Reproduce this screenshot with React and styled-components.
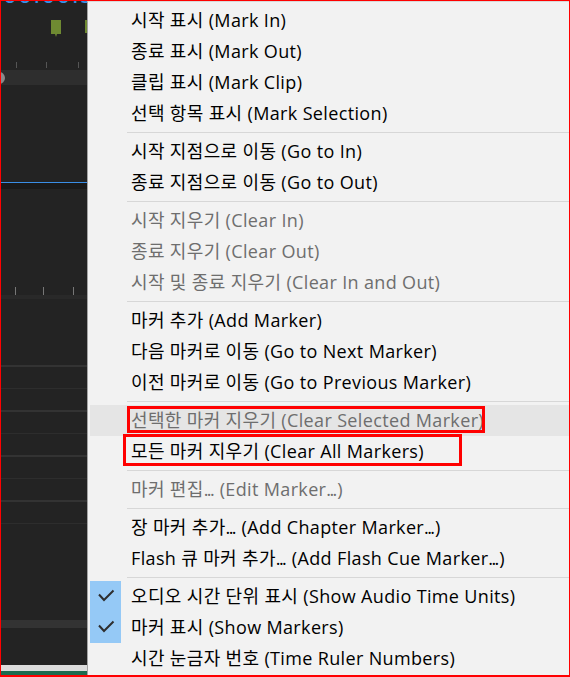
import React from "react";
import styled, { createGlobalStyle } from "styled-components";

const GlobalStyle = createGlobalStyle`
  html, body {
    margin: 0;
    padding: 0;
    background: #f2f2f2;
  }
  * {
    box-sizing: border-box;
  }
`;

const Frame = styled.div`
  display: flex;
  width: 570px;
  height: 677px;
  border: 1px solid #ff0000;
  border-bottom-width: 2px;
  overflow: hidden;
`;

/* ---------- left: the dark timeline behind the menu ---------- */

const Timeline = styled.div`
  display: flex;
  flex-direction: column;
  width: 86px;
  flex-shrink: 0;
  background: #232323;
  overflow: hidden;
`;

const Timecode = styled.div`
  height: 7px;
  overflow: hidden;
  color: #3a92e8;
  font-family: "DejaVu Sans", sans-serif;
  font-size: 22px;
  line-height: 22px;
  white-space: nowrap;
  letter-spacing: 1px;

  span {
    display: block;
    margin-top: -16px;
    margin-left: 2px;
  }
`;

const Strip = styled.div`
  height: ${(p) => p.$h}px;
  flex-shrink: 0;
  background: ${(p) => p.$bg || "transparent"};
`;

const Filler = styled.div`
  flex: 1;
`;

const ScrollStrip = styled.div`
  display: flex;
  align-items: center;
  height: 15px;
  background: #2e2e2e;
`;

const Knob = styled.div`
  width: 12px;
  height: 12px;
  margin-left: -8px;
  border-radius: 50%;
  background: #8a8a8a;
`;

const TrackRow = styled.div`
  height: ${(p) => (p.$thick ? 23 : 22)}px;
  flex-shrink: 0;
  border-top: ${(p) => (p.$thick ? "2px solid #333333" : "1px solid #2d2d2d")};
`;

/* ---------- right: the context menu ---------- */

const Menu = styled.div`
  flex: 1;
  display: flex;
  flex-direction: column;
  padding-top: 3px;
  background: #f2f2f2;
  border-left: 1px solid #a3a3a3;
  border-top: 1px solid #d9d9d9;
  font-family: "Open Sans", "Noto Sans CJK KR", sans-serif;
  font-size: 18px;
  letter-spacing: 0.35px;
`;

const Item = styled.div`
  display: flex;
  align-items: center;
  height: 31px;
  margin-left: 2px;
  background: ${(p) => (p.$hover ? "#e5e5e5" : "transparent")};
  color: ${(p) => (p.$disabled ? "#6e6e6e" : "#000000")};
`;

const CheckCell = styled.div`
  display: flex;
  align-items: center;
  justify-content: center;
  width: 31px;
  height: 31px;
  flex-shrink: 0;
  background: ${(p) => (p.$checked ? "#95c9f6" : "transparent")};
`;

const Label = styled.span`
  position: relative;
  display: inline-block;
  margin-left: 10px;
  height: 31px;
  line-height: 31px;
  white-space: nowrap;
`;

const Dots = styled.span`
  letter-spacing: -1.6px;
  margin-right: 1.6px;
`;

const Callout = styled.span`
  position: absolute;
  left: ${(p) => p.$left}px;
  top: ${(p) => p.$top}px;
  width: ${(p) => p.$w}px;
  height: ${(p) => p.$h}px;
  border: 3px solid #ff0000;
  pointer-events: none;
`;

const Separator = styled.div`
  height: 1px;
  margin: 3px 0 3px 39px;
  background: #d7d7d7;
`;

const Check = () => (
  <svg width="31" height="31" viewBox="0 0 31 31">
    <polyline
      points="9,13.5 14,19 23.5,9.5"
      fill="none"
      stroke="#2e2e2e"
      strokeWidth="2"
    />
  </svg>
);

// split "..." out so the ellipsis can be drawn tighter, like the Windows menu font
const withDots = (text) => {
  if (!text.endsWith("...")) return text;
  return (
    <>
      {text.slice(0, -3)}
      <Dots>...</Dots>
    </>
  );
};

const groups = [
  [
    { ko: "시작 표시", en: "Mark In" },
    { ko: "종료 표시", en: "Mark Out" },
    { ko: "클립 표시", en: "Mark Clip" },
    { ko: "선택 항목 표시", en: "Mark Selection" },
  ],
  [
    { ko: "시작 지점으로 이동", en: "Go to In" },
    { ko: "종료 지점으로 이동", en: "Go to Out" },
  ],
  [
    { ko: "시작 지우기", en: "Clear In", disabled: true },
    { ko: "종료 지우기", en: "Clear Out", disabled: true },
    { ko: "시작 및 종료 지우기", en: "Clear In and Out", disabled: true },
  ],
  [
    { ko: "마커 추가", en: "Add Marker" },
    { ko: "다음 마커로 이동", en: "Go to Next Marker" },
    { ko: "이전 마커로 이동", en: "Go to Previous Marker" },
  ],
  [
    {
      ko: "선택한 마커 지우기",
      en: "Clear Selected Marker",
      disabled: true,
      hover: true,
      box: { left: -4, top: 1, w: 358, h: 27 },
    },
    {
      ko: "모든 마커 지우기",
      en: "Clear All Markers",
      box: { left: -8, top: -2, w: 339, h: 32 },
    },
  ],
  [{ ko: "마커 편집...", en: "Edit Marker...", disabled: true }],
  [
    { ko: "장 마커 추가...", en: "Add Chapter Marker..." },
    { ko: "Flash 큐 마커 추가...", en: "Add Flash Cue Marker..." },
  ],
  [
    { ko: "오디오 시간 단위 표시", en: "Show Audio Time Units", checked: true },
    { ko: "마커 표시", en: "Show Markers", checked: true },
    { ko: "시간 눈금자 번호", en: "Time Ruler Numbers" },
  ],
];

const trackRows = [true, false, true, false, true, false, true, false];

export default function App() {
  return (
    <>
      <GlobalStyle />
      <Frame>
        <Timeline>
          <Timecode>
            <span>00:00:38:</span>
          </Timecode>
          <svg width="86" height="62" viewBox="0 0 86 62">
            <path d="M50 12 H60 V26 L56 26 L55 29 L54 26 L50 26 Z" fill="#6f8a32" />
            <rect x="84" y="12" width="3" height="13" fill="#6f8a32" />
            <rect x="15" y="54" width="1" height="6" fill="#555555" />
            <rect x="45" y="54" width="1" height="6" fill="#555555" />
            <rect x="77" y="54" width="1" height="6" fill="#555555" />
          </svg>
          <ScrollStrip>
            <Knob />
          </ScrollStrip>
          <Strip $h={97} />
          <Strip $h={1} $bg="#3a8ee6" />
          <Strip $h={6} $bg="#1a1a1a" />
          <Strip $h={98} />
          <svg width="86" height="8" viewBox="0 0 86 8">
            <rect x="14" y="0" width="1" height="8" fill="#777777" />
            <rect x="42" y="0" width="1" height="8" fill="#777777" />
            <rect x="72" y="0" width="1" height="8" fill="#777777" />
          </svg>
          <Strip $h={4} $bg="#292929" />
          <Strip $h={66} />
          {trackRows.map((thick, i) => (
            <TrackRow key={i} $thick={thick} />
          ))}
          <Filler />
          <Strip $h={8} $bg="#333333" />
          <Strip $h={37} />
          <Strip $h={6} $bg="#dcdcdc" />
          <Strip $h={4} $bg="#1d6b4f" />
        </Timeline>

        <Menu>
          {groups.map((group, gi) => (
            <React.Fragment key={gi}>
              {gi > 0 && <Separator />}
              {group.map((item) => (
                <Item key={item.en} $disabled={item.disabled} $hover={item.hover}>
                  <CheckCell $checked={item.checked}>
                    {item.checked && <Check />}
                  </CheckCell>
                  <Label>
                    {withDots(item.ko)} ({withDots(item.en)})
                    {item.box && (
                      <Callout
                        $left={item.box.left}
                        $top={item.box.top}
                        $w={item.box.w}
                        $h={item.box.h}
                      />
                    )}
                  </Label>
                </Item>
              ))}
            </React.Fragment>
          ))}
        </Menu>
      </Frame>
    </>
  );
}
